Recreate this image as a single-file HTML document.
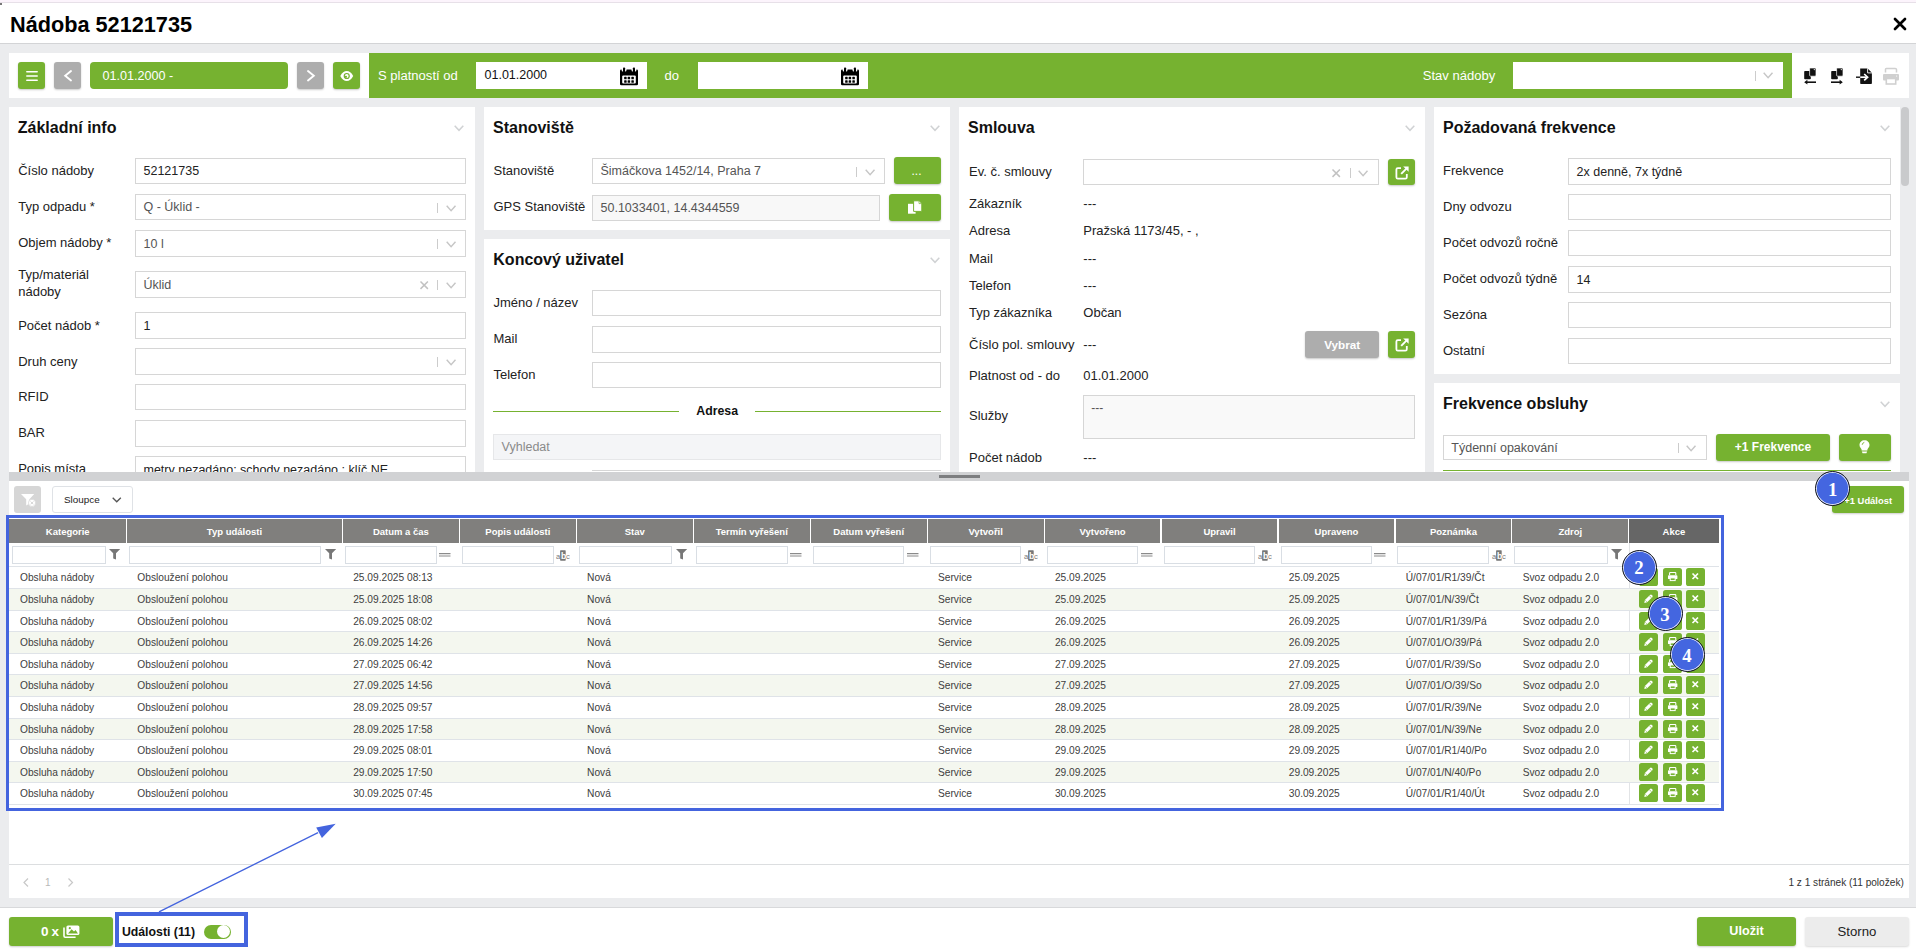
<!DOCTYPE html>
<html><head><meta charset="utf-8">
<style>
*{box-sizing:border-box}
html,body{margin:0;padding:0}
body{width:1916px;height:951px;overflow:hidden;position:relative;background:#ebecee;font-family:"Liberation Sans",sans-serif;color:#1a1a1a}
.a{position:absolute}
.t{position:absolute;white-space:nowrap;line-height:1}
</style></head><body>
<div class="a" style="left:0px;top:0px;width:1916px;height:2px;background:#fcf4fc"></div>
<div class="a" style="left:0px;top:2px;width:1916px;height:1px;background:#e7e0e8"></div>
<div class="a" style="left:0px;top:3px;width:1.5px;height:1.5px;background:#777"></div>
<div class="a" style="left:0px;top:3px;width:1916px;height:40px;background:#fff"></div>
<div class="a" style="left:0px;top:3px;width:1.5px;height:1.5px;background:#777"></div>
<div class="a" style="left:0px;top:43px;width:1916px;height:1px;background:#d3d4d6"></div>
<div class="t" style="left:10px;top:13.83px;font-size:21.7px;font-weight:bold;color:#000;">Nádoba 52121735</div>
<svg class="a" style="left:1894px;top:18px;overflow:visible" width="12" height="12" viewBox="0 0 12 12"><path d="M1 1L11 11M11 1L1 11" stroke="#000" stroke-width="2.7" stroke-linecap="round"/></svg>
<div class="a" style="left:9px;top:53px;width:1900px;height:45px;background:#fff"></div>
<div class="a" style="left:18px;top:62px;width:27px;height:27px;background:#76b230;border-radius:3px;box-shadow:0 1px 2px rgba(0,0,0,.22);"></div>
<svg class="a" style="left:25.5px;top:70.8px;overflow:visible" width="12.5" height="10" viewBox="0 0 12.5 10"><path d="M0.8 0.8H11.2M0.8 5H11.2M0.8 9.2H11.2" stroke="#fff" stroke-width="1.5" stroke-linecap="round"/></svg>
<div class="a" style="left:54px;top:62px;width:27px;height:27px;background:#adadad;border-radius:3px;box-shadow:0 1px 2px rgba(0,0,0,.2)"></div>
<svg class="a" style="left:64px;top:70px;overflow:visible" width="8" height="11.5" viewBox="0 0 8 11.5"><path d="M7 1L1.2 5.75L7 10.5" fill="none" stroke="#fff" stroke-width="1.9" stroke-linecap="round"/></svg>
<div class="a" style="left:90px;top:62px;width:198px;height:27px;background:#76b230;border-radius:4px"></div>
<div class="t" style="left:102.5px;top:70.13px;font-size:12.6px;font-weight:normal;color:#fff;">01.01.2000 -</div>
<div class="a" style="left:297px;top:62px;width:27px;height:27px;background:#adadad;border-radius:3px;box-shadow:0 1px 2px rgba(0,0,0,.2)"></div>
<svg class="a" style="left:306.5px;top:70px;overflow:visible" width="8" height="11.5" viewBox="0 0 8 11.5"><path d="M1 1L6.8 5.75L1 10.5" fill="none" stroke="#fff" stroke-width="1.9" stroke-linecap="round"/></svg>
<div class="a" style="left:333px;top:62px;width:27px;height:27px;background:#76b230;border-radius:3px;box-shadow:0 1px 2px rgba(0,0,0,.22);"></div>
<svg class="a" style="left:340px;top:70.5px;overflow:visible" width="13.5" height="10" viewBox="0 0 13.5 10"><path d="M0.3 5C2 1.6 4.3 0 6.75 0S11.5 1.6 13.2 5C11.5 8.4 9.2 10 6.75 10S2 8.4 0.3 5Z" fill="#fff"/><circle cx="6.75" cy="5" r="3.1" fill="#76b230"/><circle cx="6.75" cy="5" r="1.9" fill="#fff"/><circle cx="5.9" cy="5.8" r="1.1" fill="#76b230"/></svg>
<div class="a" style="left:369px;top:53px;width:1423px;height:45px;background:#76b230"></div>
<div class="t" style="left:378px;top:69.35px;font-size:13.05px;font-weight:normal;color:#fff;">S platností od</div>
<div class="a" style="left:476px;top:62px;width:171px;height:27px;background:#fff"></div>
<div class="t" style="left:484.5px;top:69.32px;font-size:12.5px;font-weight:normal;color:#111;">01.01.2000</div>
<svg class="a" style="left:620px;top:66.5px;overflow:visible" width="18" height="18.5" viewBox="0 0 18 18.5"><rect x="0" y="2.4" width="18" height="15.9" rx="1.3" fill="#000"/><rect x="1.7" y="1.2" width="4.7" height="3.4" rx="1" fill="#fff"/><rect x="11.6" y="1.2" width="4.7" height="3.4" rx="1" fill="#fff"/><rect x="1.7" y="0" width="4.7" height="2.4" fill="#fff"/><rect x="11.6" y="0" width="4.7" height="2.4" fill="#fff"/><rect x="3" y="0.4" width="2.1" height="4.9" rx="0.8" fill="#000"/><rect x="12.9" y="0.4" width="2.1" height="4.9" rx="0.8" fill="#000"/><rect x="2.2" y="8.5" width="13.6" height="8" rx="1" fill="#fff"/><rect x="4.15" y="9.85" width="2.5" height="2.5" rx="0.6" fill="#000"/><rect x="7.65" y="9.85" width="2.5" height="2.5" rx="0.6" fill="#000"/><rect x="11.35" y="9.85" width="2.5" height="2.5" rx="0.6" fill="#000"/><rect x="4.15" y="13.25" width="2.5" height="2.5" rx="0.6" fill="#000"/><rect x="7.65" y="13.25" width="2.5" height="2.5" rx="0.6" fill="#000"/><rect x="11.35" y="13.25" width="2.5" height="2.5" rx="0.6" fill="#000"/></svg>
<div class="t" style="left:664.5px;top:69.25px;font-size:13.05px;font-weight:normal;color:#fff;">do</div>
<div class="a" style="left:698px;top:62px;width:170px;height:27px;background:#fff"></div>
<svg class="a" style="left:841px;top:66.5px;overflow:visible" width="18" height="18.5" viewBox="0 0 18 18.5"><rect x="0" y="2.4" width="18" height="15.9" rx="1.3" fill="#000"/><rect x="1.7" y="1.2" width="4.7" height="3.4" rx="1" fill="#fff"/><rect x="11.6" y="1.2" width="4.7" height="3.4" rx="1" fill="#fff"/><rect x="1.7" y="0" width="4.7" height="2.4" fill="#fff"/><rect x="11.6" y="0" width="4.7" height="2.4" fill="#fff"/><rect x="3" y="0.4" width="2.1" height="4.9" rx="0.8" fill="#000"/><rect x="12.9" y="0.4" width="2.1" height="4.9" rx="0.8" fill="#000"/><rect x="2.2" y="8.5" width="13.6" height="8" rx="1" fill="#fff"/><rect x="4.15" y="9.85" width="2.5" height="2.5" rx="0.6" fill="#000"/><rect x="7.65" y="9.85" width="2.5" height="2.5" rx="0.6" fill="#000"/><rect x="11.35" y="9.85" width="2.5" height="2.5" rx="0.6" fill="#000"/><rect x="4.15" y="13.25" width="2.5" height="2.5" rx="0.6" fill="#000"/><rect x="7.65" y="13.25" width="2.5" height="2.5" rx="0.6" fill="#000"/><rect x="11.35" y="13.25" width="2.5" height="2.5" rx="0.6" fill="#000"/></svg>
<div class="t" style="left:1422.7px;top:69.35px;font-size:13.05px;font-weight:normal;color:#fff;">Stav nádoby</div>
<div class="a" style="left:1513px;top:62px;width:270px;height:27px;background:#fff"></div>
<div class="a" style="left:1754.5px;top:70.5px;width:1px;height:10px;background:#cccccc"></div>
<svg class="a" style="left:1763px;top:72.3px;overflow:visible" width="10.2" height="6.5" viewBox="0 0 10.2 6.5"><path d="M0.7 0.7L5.1 5.8L9.5 0.7" fill="none" stroke="#c6c6c6" stroke-width="1.4"/></svg>
<svg class="a" style="left:1804.2px;top:68px;overflow:visible" width="12" height="16" viewBox="0 0 12 16"><rect x="0.2" y="3" width="6.6" height="8.2" rx="0.8" fill="#111"/><path d="M5.6 0H11Q12 0 12 1V7.2Q12 8.2 11 8.2H6.6Q5.6 8.2 5.6 7.2Z" fill="#111" stroke="#fff" stroke-width="0.7"/><circle cx="10.3" cy="1.6" r="0.6" fill="#fff"/><path d="M1.6 14.2H12" stroke="#111" stroke-width="1.6"/><path d="M0.2 14.2L3.4 11.8V16.6Z" fill="#111"/></svg>
<svg class="a" style="left:1831.2px;top:68px;overflow:visible" width="12" height="16" viewBox="0 0 12 16"><rect x="0.2" y="3" width="6.6" height="8.2" rx="0.8" fill="#111"/><path d="M5.6 0H11Q12 0 12 1V7.2Q12 8.2 11 8.2H6.6Q5.6 8.2 5.6 7.2Z" fill="#111" stroke="#fff" stroke-width="0.7"/><circle cx="10.3" cy="1.6" r="0.6" fill="#fff"/><path d="M0 14.2H10.4" stroke="#111" stroke-width="1.6"/><path d="M11.8 14.2L8.6 11.8V16.6Z" fill="#111"/></svg>
<svg class="a" style="left:1856px;top:68px;overflow:visible" width="16" height="16" viewBox="0 0 16 16"><path d="M4.2 0.4H11.6L15.9 4.8V15.2Q15.9 16 15.1 16H5Q4.2 16 4.2 15.2Z" fill="#111"/><path d="M11.6 0.3V4.9H16" fill="none" stroke="#fff" stroke-width="0.9"/><path d="M0 9.2H10" stroke="#111" stroke-width="1.4"/><path d="M4.2 9.2H10.6" stroke="#fff" stroke-width="1.7"/><path d="M8.2 6L11.6 9.2L8.2 12.4" fill="none" stroke="#fff" stroke-width="1.7"/></svg>
<svg class="a" style="left:1883px;top:68px;overflow:visible" width="16" height="16" viewBox="0 0 16 16"><path d="M2.5 4.5V1.2Q2.5 0.4 3.3 0.4H12.2Q13.5 0.4 13.5 1.6V4.5" fill="none" stroke="#d0d0d0" stroke-width="1.5"/><rect x="0" y="6" width="16" height="6.5" rx="1" fill="#d0d0d0"/><rect x="3.3" y="10.5" width="9.4" height="5.5" fill="#fff" stroke="#d0d0d0" stroke-width="1.6"/><circle cx="13.6" cy="8" r="0.6" fill="#fff"/></svg>
<div class="a" style="left:9px;top:107px;width:466px;height:365px;background:#fff"></div>
<div class="a" style="left:484px;top:107px;width:466px;height:123px;background:#fff"></div>
<div class="a" style="left:484px;top:239px;width:466px;height:233px;background:#fff"></div>
<div class="a" style="left:959px;top:107px;width:466px;height:365px;background:#fff"></div>
<div class="a" style="left:1434px;top:107px;width:466px;height:267px;background:#fff"></div>
<div class="a" style="left:1434px;top:383px;width:466px;height:89px;background:#fff"></div>
<div class="a" style="left:1900.5px;top:107px;width:8.5px;height:79px;background:#c9cacc;border-radius:5px"></div>
<div class="t" style="left:17.8px;top:119.66px;font-size:16px;font-weight:bold;color:#111;">Základní info</div>
<svg class="a" style="left:454px;top:125.2px;overflow:visible" width="10" height="6" viewBox="0 0 10 6"><path d="M0.7 0.7L5.0 5.3L9.3 0.7" fill="none" stroke="#d0d2d4" stroke-width="1.5"/></svg>
<div class="a" style="left:135.2px;top:158.1px;width:330.8px;height:26.4px;background:#fff;border:1px solid #d6d6d6"></div>
<div class="t" style="left:143.5px;top:165.32px;font-size:12.5px;font-weight:normal;color:#222;">52121735</div>
<div class="t" style="left:18.2px;top:164.20px;font-size:13px;font-weight:normal;color:#222;">Číslo nádoby</div>
<div class="a" style="left:135.2px;top:194.1px;width:330.8px;height:26.4px;background:#fff;border:1px solid #d6d6d6"></div>
<div class="a" style="left:437.4px;top:202.7px;width:1px;height:10px;background:#cccccc"></div>
<svg class="a" style="left:445.7px;top:205.1px;overflow:visible" width="10.2" height="6.5" viewBox="0 0 10.2 6.5"><path d="M0.7 0.7L5.1 5.8L9.5 0.7" fill="none" stroke="#c6c6c6" stroke-width="1.4"/></svg>
<div class="t" style="left:143.5px;top:201.32px;font-size:12.5px;font-weight:normal;color:#555;">Q - Úklid -</div>
<div class="t" style="left:18.2px;top:200.20px;font-size:13px;font-weight:normal;color:#222;">Typ odpadu *</div>
<div class="a" style="left:135.2px;top:230.3px;width:330.8px;height:26.4px;background:#fff;border:1px solid #d6d6d6"></div>
<div class="a" style="left:437.4px;top:238.9px;width:1px;height:10px;background:#cccccc"></div>
<svg class="a" style="left:445.7px;top:241.3px;overflow:visible" width="10.2" height="6.5" viewBox="0 0 10.2 6.5"><path d="M0.7 0.7L5.1 5.8L9.5 0.7" fill="none" stroke="#c6c6c6" stroke-width="1.4"/></svg>
<div class="t" style="left:143.5px;top:237.52px;font-size:12.5px;font-weight:normal;color:#555;">10 l</div>
<div class="t" style="left:18.2px;top:236.40px;font-size:13px;font-weight:normal;color:#222;">Objem nádoby *</div>
<div class="a" style="left:135.2px;top:271.4px;width:330.8px;height:26.4px;background:#fff;border:1px solid #d6d6d6"></div>
<div class="a" style="left:437.4px;top:279.99999999999994px;width:1px;height:10px;background:#cccccc"></div>
<svg class="a" style="left:445.7px;top:282.4px;overflow:visible" width="10.2" height="6.5" viewBox="0 0 10.2 6.5"><path d="M0.7 0.7L5.1 5.8L9.5 0.7" fill="none" stroke="#c6c6c6" stroke-width="1.4"/></svg>
<svg class="a" style="left:419.7px;top:280.99999999999994px;overflow:visible" width="8.4" height="8.4" viewBox="0 0 8.4 8.4"><path d="M0.5 0.5L7.9 7.9M7.9 0.5L0.5 7.9" stroke="#c2c2c2" stroke-width="1.5"/></svg>
<div class="t" style="left:143.5px;top:278.62px;font-size:12.5px;font-weight:normal;color:#555;">Úklid</div>
<div class="t" style="left:18.2px;top:267.70px;font-size:13px;font-weight:normal;color:#222;">Typ/materiál</div>
<div class="t" style="left:18.2px;top:285.30px;font-size:13px;font-weight:normal;color:#222;">nádoby</div>
<div class="a" style="left:135.2px;top:312.4px;width:330.8px;height:26.4px;background:#fff;border:1px solid #d6d6d6"></div>
<div class="t" style="left:143.5px;top:319.62px;font-size:12.5px;font-weight:normal;color:#222;">1</div>
<div class="t" style="left:18.2px;top:318.50px;font-size:13px;font-weight:normal;color:#222;">Počet nádob *</div>
<div class="a" style="left:135.2px;top:348.4px;width:330.8px;height:26.4px;background:#fff;border:1px solid #d6d6d6"></div>
<div class="a" style="left:437.4px;top:356.99999999999994px;width:1px;height:10px;background:#cccccc"></div>
<svg class="a" style="left:445.7px;top:359.4px;overflow:visible" width="10.2" height="6.5" viewBox="0 0 10.2 6.5"><path d="M0.7 0.7L5.1 5.8L9.5 0.7" fill="none" stroke="#c6c6c6" stroke-width="1.4"/></svg>
<div class="t" style="left:18.2px;top:354.50px;font-size:13px;font-weight:normal;color:#222;">Druh ceny</div>
<div class="a" style="left:135.2px;top:384.1px;width:330.8px;height:26.4px;background:#fff;border:1px solid #d6d6d6"></div>
<div class="t" style="left:18.2px;top:390.20px;font-size:13px;font-weight:normal;color:#222;">RFID</div>
<div class="a" style="left:135.2px;top:420.2px;width:330.8px;height:26.4px;background:#fff;border:1px solid #d6d6d6"></div>
<div class="t" style="left:18.2px;top:426.30px;font-size:13px;font-weight:normal;color:#222;">BAR</div>
<div class="a" style="left:135.2px;top:456.3px;width:330.8px;height:26.4px;background:#fff;border:1px solid #d6d6d6"></div>
<div class="t" style="left:143.5px;top:463.52px;font-size:12.5px;font-weight:normal;color:#222;">metry nezadáno; schody nezadáno ; klíč NE</div>
<div class="t" style="left:18.2px;top:462.40px;font-size:13px;font-weight:normal;color:#222;">Popis místa</div>
<div class="t" style="left:493px;top:119.66px;font-size:16px;font-weight:bold;color:#111;">Stanoviště</div>
<svg class="a" style="left:929.5px;top:125.2px;overflow:visible" width="10" height="6" viewBox="0 0 10 6"><path d="M0.7 0.7L5.0 5.3L9.3 0.7" fill="none" stroke="#d0d2d4" stroke-width="1.5"/></svg>
<div class="t" style="left:493.5px;top:164.20px;font-size:13px;font-weight:normal;color:#222;">Stanoviště</div>
<div class="a" style="left:592.2px;top:158.3px;width:292.6px;height:26.2px;background:#fff;border:1px solid #d6d6d6"></div>
<div class="a" style="left:856.2px;top:166.8px;width:1px;height:10px;background:#cccccc"></div>
<svg class="a" style="left:864.5000000000001px;top:169.20000000000002px;overflow:visible" width="10.2" height="6.5" viewBox="0 0 10.2 6.5"><path d="M0.7 0.7L5.1 5.8L9.5 0.7" fill="none" stroke="#c6c6c6" stroke-width="1.4"/></svg>
<div class="t" style="left:600.5px;top:165.42px;font-size:12.5px;font-weight:normal;color:#555;">Šimáčkova 1452/14, Praha 7</div>
<div class="a" style="left:894px;top:157.2px;width:47px;height:26.6px;background:#76b230;border-radius:3px;box-shadow:0 1px 2px rgba(0,0,0,.22);"></div>
<div class="t" style="left:911.5px;top:165.24px;font-size:12px;font-weight:normal;color:#fff;">...</div>
<div class="t" style="left:493.5px;top:200.40px;font-size:13px;font-weight:normal;color:#222;">GPS Stanoviště</div>
<div class="a" style="left:592.2px;top:194.5px;width:287.5px;height:26px;background:#f8f8f8;border:1px solid #d6d6d6"></div>
<div class="t" style="left:600.5px;top:201.52px;font-size:12.5px;font-weight:normal;color:#555;">50.1033401, 14.4344559</div>
<div class="a" style="left:889.2px;top:194.2px;width:51.8px;height:26.5px;background:#76b230;border-radius:3px;box-shadow:0 1px 2px rgba(0,0,0,.22);"></div>
<svg class="a" style="left:908px;top:201px;overflow:visible" width="14" height="13" viewBox="0 0 14 13"><path d="M0 2.8H7.6V12.7H0Z" fill="#fff"/><path d="M5.6 -0.2H11.2L13.8 2.4V10.4H5.6Z" fill="#fff" stroke="#76b230" stroke-width="1"/><path d="M11 0.2V2.6H13.4" fill="none" stroke="#76b230" stroke-width="0.7"/></svg>
<div class="t" style="left:493.3px;top:251.86px;font-size:16px;font-weight:bold;color:#111;">Koncový uživatel</div>
<svg class="a" style="left:929.5px;top:257.2px;overflow:visible" width="10" height="6" viewBox="0 0 10 6"><path d="M0.7 0.7L5.0 5.3L9.3 0.7" fill="none" stroke="#d0d2d4" stroke-width="1.5"/></svg>
<div class="a" style="left:592.1px;top:290.1px;width:348.7px;height:26.4px;background:#fff;border:1px solid #d6d6d6"></div>
<div class="t" style="left:493.5px;top:296.20px;font-size:13px;font-weight:normal;color:#222;">Jméno / název</div>
<div class="a" style="left:592.1px;top:326.2px;width:348.7px;height:26.4px;background:#fff;border:1px solid #d6d6d6"></div>
<div class="t" style="left:493.5px;top:332.30px;font-size:13px;font-weight:normal;color:#222;">Mail</div>
<div class="a" style="left:592.1px;top:362px;width:348.7px;height:26.4px;background:#fff;border:1px solid #d6d6d6"></div>
<div class="t" style="left:493.5px;top:368.10px;font-size:13px;font-weight:normal;color:#222;">Telefon</div>
<div class="a" style="left:493.3px;top:410.6px;width:185.4px;height:1.2px;background:#76b230"></div>
<div class="a" style="left:755.3px;top:410.6px;width:185.5px;height:1.2px;background:#76b230"></div>
<div class="t" style="left:696.3px;top:404.89px;font-size:12.3px;font-weight:bold;color:#111;">Adresa</div>
<div class="a" style="left:493.3px;top:434.4px;width:447.5px;height:26.1px;background:#f4f5f7;border:1px solid #e6e7e9"></div>
<div class="t" style="left:501.6px;top:441.47px;font-size:12.5px;font-weight:normal;color:#8a8a8a;">Vyhledat</div>
<div class="a" style="left:592.1px;top:470px;width:348.7px;height:2px;background:#fff;border-top:1px solid #d6d6d6"></div>
<div class="t" style="left:968px;top:119.96px;font-size:16px;font-weight:bold;color:#111;">Smlouva</div>
<svg class="a" style="left:1404.5px;top:125.2px;overflow:visible" width="10" height="6" viewBox="0 0 10 6"><path d="M0.7 0.7L5.0 5.3L9.3 0.7" fill="none" stroke="#d0d2d4" stroke-width="1.5"/></svg>
<div class="t" style="left:969px;top:165.00px;font-size:13px;font-weight:normal;color:#222;">Ev. č. smlouvy</div>
<div class="a" style="left:1082.9px;top:159.1px;width:295.8px;height:26.1px;background:#fff;border:1px solid #d6d6d6"></div>
<div class="a" style="left:1350.1000000000001px;top:167.55px;width:1px;height:10px;background:#cccccc"></div>
<svg class="a" style="left:1358.4px;top:169.95000000000002px;overflow:visible" width="10.2" height="6.5" viewBox="0 0 10.2 6.5"><path d="M0.7 0.7L5.1 5.8L9.5 0.7" fill="none" stroke="#c6c6c6" stroke-width="1.4"/></svg>
<svg class="a" style="left:1332.4px;top:168.55px;overflow:visible" width="8.4" height="8.4" viewBox="0 0 8.4 8.4"><path d="M0.5 0.5L7.9 7.9M7.9 0.5L0.5 7.9" stroke="#c2c2c2" stroke-width="1.5"/></svg>
<div class="a" style="left:1388.1px;top:159.1px;width:26.7px;height:26.4px;background:#76b230;border-radius:3px;box-shadow:0 1px 2px rgba(0,0,0,.22);"></div>
<svg class="a" style="left:1394.6px;top:165.6px;overflow:visible" width="14" height="14" viewBox="0 0 14 14"><path d="M6 2.2H2.8Q1.4 2.2 1.4 3.6V11.2Q1.4 12.6 2.8 12.6H10.4Q11.8 12.6 11.8 11.2V8" fill="none" stroke="#fff" stroke-width="1.8"/><path d="M6.2 7.8L12.4 1.6" stroke="#fff" stroke-width="1.9"/><path d="M8.2 0.4H13.6V5.8Z" fill="#fff"/></svg>
<div class="t" style="left:969px;top:196.50px;font-size:13px;font-weight:normal;color:#222;">Zákazník</div>
<div class="t" style="left:1083.3px;top:196.50px;font-size:13px;font-weight:normal;color:#222;">---</div>
<div class="t" style="left:969px;top:224.20px;font-size:13px;font-weight:normal;color:#222;">Adresa</div>
<div class="t" style="left:1083.3px;top:224.20px;font-size:13px;font-weight:normal;color:#222;">Pražská 1173/45, - ,</div>
<div class="t" style="left:969px;top:252.10px;font-size:13px;font-weight:normal;color:#222;">Mail</div>
<div class="t" style="left:1083.3px;top:252.10px;font-size:13px;font-weight:normal;color:#222;">---</div>
<div class="t" style="left:969px;top:278.70px;font-size:13px;font-weight:normal;color:#222;">Telefon</div>
<div class="t" style="left:1083.3px;top:278.70px;font-size:13px;font-weight:normal;color:#222;">---</div>
<div class="t" style="left:969px;top:306.10px;font-size:13px;font-weight:normal;color:#222;">Typ zákazníka</div>
<div class="t" style="left:1083.3px;top:306.10px;font-size:13px;font-weight:normal;color:#222;">Občan</div>
<div class="t" style="left:969px;top:337.70px;font-size:13px;font-weight:normal;color:#222;">Číslo pol. smlouvy</div>
<div class="t" style="left:1083.3px;top:337.70px;font-size:13px;font-weight:normal;color:#222;">---</div>
<div class="t" style="left:969px;top:368.80px;font-size:13px;font-weight:normal;color:#222;">Platnost od - do</div>
<div class="t" style="left:1083.3px;top:368.80px;font-size:13px;font-weight:normal;color:#222;">01.01.2000</div>
<div class="a" style="left:1304.9px;top:331.4px;width:73.8px;height:26.4px;background:#adadad;border-radius:3px;box-shadow:0 1px 2px rgba(0,0,0,.22)"></div>
<div class="t" style="left:1042.2px;width:600px;text-align:center;top:339.10px;font-size:11.7px;font-weight:bold;color:#fff;">Vybrat</div>
<div class="a" style="left:1388.1px;top:331.4px;width:26.7px;height:26.4px;background:#76b230;border-radius:3px;box-shadow:0 1px 2px rgba(0,0,0,.22);"></div>
<svg class="a" style="left:1394.6px;top:337.9px;overflow:visible" width="14" height="14" viewBox="0 0 14 14"><path d="M6 2.2H2.8Q1.4 2.2 1.4 3.6V11.2Q1.4 12.6 2.8 12.6H10.4Q11.8 12.6 11.8 11.2V8" fill="none" stroke="#fff" stroke-width="1.8"/><path d="M6.2 7.8L12.4 1.6" stroke="#fff" stroke-width="1.9"/><path d="M8.2 0.4H13.6V5.8Z" fill="#fff"/></svg>
<div class="t" style="left:969px;top:409.40px;font-size:13px;font-weight:normal;color:#222;">Služby</div>
<div class="a" style="left:1083px;top:395.3px;width:332px;height:44.2px;background:#f9f9f9;border:1px solid #d6d6d6"></div>
<div class="t" style="left:1091.3px;top:401.84px;font-size:12px;font-weight:normal;color:#555;">---</div>
<div class="t" style="left:969px;top:451.10px;font-size:13px;font-weight:normal;color:#222;">Počet nádob</div>
<div class="t" style="left:1083.3px;top:451.10px;font-size:13px;font-weight:normal;color:#222;">---</div>
<div class="t" style="left:1443px;top:119.76px;font-size:16px;font-weight:bold;color:#111;">Požadovaná frekvence</div>
<svg class="a" style="left:1879.5px;top:125.2px;overflow:visible" width="10" height="6" viewBox="0 0 10 6"><path d="M0.7 0.7L5.0 5.3L9.3 0.7" fill="none" stroke="#d0d2d4" stroke-width="1.5"/></svg>
<div class="a" style="left:1568.3px;top:158.4px;width:322.5px;height:26.2px;background:#fff;border:1px solid #d6d6d6"></div>
<div class="t" style="left:1576.6px;top:165.52px;font-size:12.5px;font-weight:normal;color:#222;">2x denně, 7x týdně</div>
<div class="t" style="left:1443px;top:164.40px;font-size:13px;font-weight:normal;color:#222;">Frekvence</div>
<div class="a" style="left:1568.3px;top:193.9px;width:322.5px;height:26.2px;background:#fff;border:1px solid #d6d6d6"></div>
<div class="t" style="left:1443px;top:199.90px;font-size:13px;font-weight:normal;color:#222;">Dny odvozu</div>
<div class="a" style="left:1568.3px;top:230.1px;width:322.5px;height:26.2px;background:#fff;border:1px solid #d6d6d6"></div>
<div class="t" style="left:1443px;top:236.10px;font-size:13px;font-weight:normal;color:#222;">Počet odvozů ročně</div>
<div class="a" style="left:1568.3px;top:266.4px;width:322.5px;height:26.2px;background:#fff;border:1px solid #d6d6d6"></div>
<div class="t" style="left:1576.6px;top:273.52px;font-size:12.5px;font-weight:normal;color:#222;">14</div>
<div class="t" style="left:1443px;top:272.40px;font-size:13px;font-weight:normal;color:#222;">Počet odvozů týdně</div>
<div class="a" style="left:1568.3px;top:302px;width:322.5px;height:26.2px;background:#fff;border:1px solid #d6d6d6"></div>
<div class="t" style="left:1443px;top:308.00px;font-size:13px;font-weight:normal;color:#222;">Sezóna</div>
<div class="a" style="left:1568.3px;top:338.3px;width:322.5px;height:26.2px;background:#fff;border:1px solid #d6d6d6"></div>
<div class="t" style="left:1443px;top:344.30px;font-size:13px;font-weight:normal;color:#222;">Ostatní</div>
<div class="t" style="left:1443px;top:395.76px;font-size:16px;font-weight:bold;color:#111;">Frekvence obsluhy</div>
<svg class="a" style="left:1879.5px;top:401.2px;overflow:visible" width="10" height="6" viewBox="0 0 10 6"><path d="M0.7 0.7L5.0 5.3L9.3 0.7" fill="none" stroke="#d0d2d4" stroke-width="1.5"/></svg>
<div class="a" style="left:1443px;top:434.6px;width:263.5px;height:25.9px;background:#fff;border:1px solid #d6d6d6"></div>
<div class="a" style="left:1677.9px;top:442.95px;width:1px;height:10px;background:#cccccc"></div>
<svg class="a" style="left:1686.2px;top:445.35px;overflow:visible" width="10.2" height="6.5" viewBox="0 0 10.2 6.5"><path d="M0.7 0.7L5.1 5.8L9.5 0.7" fill="none" stroke="#c6c6c6" stroke-width="1.4"/></svg>
<div class="t" style="left:1451.3px;top:441.57px;font-size:12.5px;font-weight:normal;color:#555;">Týdenní opakování</div>
<div class="a" style="left:1716px;top:434.1px;width:113.6px;height:26.5px;background:#76b230;border-radius:3px;box-shadow:0 1px 2px rgba(0,0,0,.22);"></div>
<div class="t" style="left:1473px;width:600px;text-align:center;top:441.04px;font-size:12px;font-weight:bold;color:#fff;">+1 Frekvence</div>
<div class="a" style="left:1839px;top:434.1px;width:51.8px;height:26.5px;background:#76b230;border-radius:3px;box-shadow:0 1px 2px rgba(0,0,0,.22);"></div>
<svg class="a" style="left:1859.2px;top:439.6px;overflow:visible" width="11" height="14" viewBox="0 0 11 14"><path d="M5.5 0.3C2.6 0.3 0.5 2.4 0.5 5.1C0.5 7.2 2 8.2 2.6 9.6V10.6H8.4V9.6C9 8.2 10.5 7.2 10.5 5.1C10.5 2.4 8.4 0.3 5.5 0.3Z" fill="#fff"/><path d="M2.8 11.6H8.2L7.4 13.3H3.6Z" fill="#fff"/><path d="M3.2 4.8Q3.4 2.8 5.3 2.4" fill="none" stroke="#76b230" stroke-width="0.9"/></svg>
<div class="a" style="left:1443px;top:469.7px;width:447.8px;height:1.3px;background:#76b230"></div>
<div class="a" style="left:9px;top:472px;width:1900px;height:9px;background:#d1d2d4"></div>
<div class="a" style="left:939px;top:475px;width:41px;height:3px;background:#7d7e80"></div>
<div class="a" style="left:9px;top:481px;width:1900px;height:417px;background:#fff"></div>
<div class="a" style="left:14px;top:486px;width:27px;height:27px;background:#d6d6d6;border-radius:3px"></div>
<svg class="a" style="left:20.9px;top:494px;overflow:visible" width="15" height="13" viewBox="0 0 15 13"><path d="M0 0H13.2L8.4 5.2V9.4L5.2 11.6V5.2Z" fill="#fff"/><circle cx="11" cy="8.9" r="3.6" fill="#fff" stroke="#d6d6d6" stroke-width="0.7"/><path d="M9.6 7.5L12.4 10.3M12.4 7.5L9.6 10.3" stroke="#d0d0d0" stroke-width="0.9"/></svg>
<div class="a" style="left:52.2px;top:486px;width:80.5px;height:27px;background:#fff;border:1px solid #dfe2e6;border-radius:3px"></div>
<div class="t" style="left:64px;top:495.02px;font-size:9.9px;font-weight:normal;color:#222;">Sloupce</div>
<svg class="a" style="left:111.5px;top:497.3px;overflow:visible" width="9.5" height="5.5" viewBox="0 0 9.5 5.5"><path d="M0.7 0.7L4.75 4.8L8.8 0.7" fill="none" stroke="#555" stroke-width="1.3"/></svg>
<div class="a" style="left:1832px;top:486.2px;width:72px;height:26.6px;background:#76b230;border-radius:3px;box-shadow:0 1px 2px rgba(0,0,0,.2)"></div>
<div class="t" style="left:1292px;width:600px;text-align:right;top:495.64px;font-size:9.4px;font-weight:bold;color:#fff;">+1 Událost</div>
<div class="a" style="left:9px;top:519px;width:1710px;height:24px;background:#807f7d"></div>
<div class="a" style="left:1628.9px;top:519px;width:90.1px;height:24px;background:#666"></div>
<div class="t" style="left:-232.25px;width:600px;text-align:center;top:526.56px;font-size:9.5px;font-weight:bold;color:#fff;">Kategorie</div>
<div class="a" style="left:12px;top:546.3px;width:93.5px;height:17.4px;background:#fff;border:1px solid #d9dee4"></div>
<svg class="a" style="left:108.8px;top:548.9px;overflow:visible" width="11.2" height="10.6" viewBox="0 0 11.2 10.6"><path d="M0 0H11.2L7 4.2V10.6L4.2 9.4V4.2Z" fill="#777"/></svg>
<div class="a" style="left:125.9px;top:519px;width:1.2px;height:24px;background:#fff"></div>
<div class="t" style="left:-65.55000000000001px;width:600px;text-align:center;top:526.56px;font-size:9.5px;font-weight:bold;color:#fff;">Typ události</div>
<div class="a" style="left:129.0px;top:546.3px;width:192.39999999999998px;height:17.4px;background:#fff;border:1px solid #d9dee4"></div>
<svg class="a" style="left:324.7px;top:548.9px;overflow:visible" width="11.2" height="10.6" viewBox="0 0 11.2 10.6"><path d="M0 0H11.2L7 4.2V10.6L4.2 9.4V4.2Z" fill="#777"/></svg>
<div class="a" style="left:341.79999999999995px;top:519px;width:1.2px;height:24px;background:#fff"></div>
<div class="t" style="left:100.875px;width:600px;text-align:center;top:526.56px;font-size:9.5px;font-weight:bold;color:#fff;">Datum a čas</div>
<div class="a" style="left:344.9px;top:546.3px;width:91.75px;height:17.4px;background:#fff;border:1px solid #d9dee4"></div>
<svg class="a" style="left:438.84999999999997px;top:553.2px;overflow:visible" width="11.5" height="3.6" viewBox="0 0 11.5 3.6"><path d="M0 0.6H11.5M0 3H11.5" stroke="#8a8a8a" stroke-width="1.1"/></svg>
<div class="a" style="left:458.74999999999994px;top:519px;width:1.2px;height:24px;background:#fff"></div>
<div class="t" style="left:217.82499999999993px;width:600px;text-align:center;top:526.56px;font-size:9.5px;font-weight:bold;color:#fff;">Popis události</div>
<div class="a" style="left:461.84999999999997px;top:546.3px;width:91.74999999999994px;height:17.4px;background:#fff;border:1px solid #d9dee4"></div>
<svg class="a" style="left:550.0px;top:545px;overflow:visible" width="25" height="20" viewBox="0 0 25 20"><g font-family="Liberation Sans" fill="#777"><text x="5.9" y="13.8" font-size="7.6">a</text><rect x="10.1" y="5.3" width="5.6" height="10.4" rx="0.6"/><text x="16" y="13.8" font-size="7.6">c</text></g><text x="10.9" y="13.6" font-size="8.6" font-weight="bold" fill="#fff" font-family="Liberation Sans">b</text></svg>
<div class="a" style="left:575.6999999999999px;top:519px;width:1.2px;height:24px;background:#fff"></div>
<div class="t" style="left:334.775px;width:600px;text-align:center;top:526.56px;font-size:9.5px;font-weight:bold;color:#fff;">Stav</div>
<div class="a" style="left:578.8px;top:546.3px;width:93.45000000000005px;height:17.4px;background:#fff;border:1px solid #d9dee4"></div>
<svg class="a" style="left:675.55px;top:548.9px;overflow:visible" width="11.2" height="10.6" viewBox="0 0 11.2 10.6"><path d="M0 0H11.2L7 4.2V10.6L4.2 9.4V4.2Z" fill="#777"/></svg>
<div class="a" style="left:692.65px;top:519px;width:1.2px;height:24px;background:#fff"></div>
<div class="t" style="left:451.725px;width:600px;text-align:center;top:526.56px;font-size:9.5px;font-weight:bold;color:#fff;">Termín vyřešení</div>
<div class="a" style="left:695.75px;top:546.3px;width:91.75px;height:17.4px;background:#fff;border:1px solid #d9dee4"></div>
<svg class="a" style="left:789.7px;top:553.2px;overflow:visible" width="11.5" height="3.6" viewBox="0 0 11.5 3.6"><path d="M0 0.6H11.5M0 3H11.5" stroke="#8a8a8a" stroke-width="1.1"/></svg>
<div class="a" style="left:809.6px;top:519px;width:1.2px;height:24px;background:#fff"></div>
<div class="t" style="left:568.675px;width:600px;text-align:center;top:526.56px;font-size:9.5px;font-weight:bold;color:#fff;">Datum vyřešení</div>
<div class="a" style="left:812.7px;top:546.3px;width:91.74999999999989px;height:17.4px;background:#fff;border:1px solid #d9dee4"></div>
<svg class="a" style="left:906.65px;top:553.2px;overflow:visible" width="11.5" height="3.6" viewBox="0 0 11.5 3.6"><path d="M0 0.6H11.5M0 3H11.5" stroke="#8a8a8a" stroke-width="1.1"/></svg>
<div class="a" style="left:926.55px;top:519px;width:1.2px;height:24px;background:#fff"></div>
<div class="t" style="left:685.625px;width:600px;text-align:center;top:526.56px;font-size:9.5px;font-weight:bold;color:#fff;">Vytvořil</div>
<div class="a" style="left:929.65px;top:546.3px;width:91.74999999999989px;height:17.4px;background:#fff;border:1px solid #d9dee4"></div>
<svg class="a" style="left:1017.8px;top:545px;overflow:visible" width="25" height="20" viewBox="0 0 25 20"><g font-family="Liberation Sans" fill="#777"><text x="5.9" y="13.8" font-size="7.6">a</text><rect x="10.1" y="5.3" width="5.6" height="10.4" rx="0.6"/><text x="16" y="13.8" font-size="7.6">c</text></g><text x="10.9" y="13.6" font-size="8.6" font-weight="bold" fill="#fff" font-family="Liberation Sans">b</text></svg>
<div class="a" style="left:1043.5px;top:519px;width:1.2px;height:24px;background:#fff"></div>
<div class="t" style="left:802.5749999999998px;width:600px;text-align:center;top:526.56px;font-size:9.5px;font-weight:bold;color:#fff;">Vytvořeno</div>
<div class="a" style="left:1046.6px;top:546.3px;width:91.75px;height:17.4px;background:#fff;border:1px solid #d9dee4"></div>
<svg class="a" style="left:1140.55px;top:553.2px;overflow:visible" width="11.5" height="3.6" viewBox="0 0 11.5 3.6"><path d="M0 0.6H11.5M0 3H11.5" stroke="#8a8a8a" stroke-width="1.1"/></svg>
<div class="a" style="left:1160.45px;top:519px;width:1.2px;height:24px;background:#fff"></div>
<div class="t" style="left:919.5250000000001px;width:600px;text-align:center;top:526.56px;font-size:9.5px;font-weight:bold;color:#fff;">Upravil</div>
<div class="a" style="left:1163.55px;top:546.3px;width:91.75px;height:17.4px;background:#fff;border:1px solid #d9dee4"></div>
<svg class="a" style="left:1251.7px;top:545px;overflow:visible" width="25" height="20" viewBox="0 0 25 20"><g font-family="Liberation Sans" fill="#777"><text x="5.9" y="13.8" font-size="7.6">a</text><rect x="10.1" y="5.3" width="5.6" height="10.4" rx="0.6"/><text x="16" y="13.8" font-size="7.6">c</text></g><text x="10.9" y="13.6" font-size="8.6" font-weight="bold" fill="#fff" font-family="Liberation Sans">b</text></svg>
<div class="a" style="left:1277.4px;top:519px;width:1.2px;height:24px;background:#fff"></div>
<div class="t" style="left:1036.475px;width:600px;text-align:center;top:526.56px;font-size:9.5px;font-weight:bold;color:#fff;">Upraveno</div>
<div class="a" style="left:1280.5px;top:546.3px;width:91.74999999999977px;height:17.4px;background:#fff;border:1px solid #d9dee4"></div>
<svg class="a" style="left:1374.4499999999998px;top:553.2px;overflow:visible" width="11.5" height="3.6" viewBox="0 0 11.5 3.6"><path d="M0 0.6H11.5M0 3H11.5" stroke="#8a8a8a" stroke-width="1.1"/></svg>
<div class="a" style="left:1394.35px;top:519px;width:1.2px;height:24px;background:#fff"></div>
<div class="t" style="left:1153.425px;width:600px;text-align:center;top:526.56px;font-size:9.5px;font-weight:bold;color:#fff;">Poznámka</div>
<div class="a" style="left:1397.4499999999998px;top:546.3px;width:91.75000000000023px;height:17.4px;background:#fff;border:1px solid #d9dee4"></div>
<svg class="a" style="left:1485.6000000000001px;top:545px;overflow:visible" width="25" height="20" viewBox="0 0 25 20"><g font-family="Liberation Sans" fill="#777"><text x="5.9" y="13.8" font-size="7.6">a</text><rect x="10.1" y="5.3" width="5.6" height="10.4" rx="0.6"/><text x="16" y="13.8" font-size="7.6">c</text></g><text x="10.9" y="13.6" font-size="8.6" font-weight="bold" fill="#fff" font-family="Liberation Sans">b</text></svg>
<div class="a" style="left:1511.3000000000002px;top:519px;width:1.2px;height:24px;background:#fff"></div>
<div class="t" style="left:1270.375px;width:600px;text-align:center;top:526.56px;font-size:9.5px;font-weight:bold;color:#fff;">Zdroj</div>
<div class="a" style="left:1514.4px;top:546.3px;width:93.44999999999982px;height:17.4px;background:#fff;border:1px solid #d9dee4"></div>
<svg class="a" style="left:1611.1499999999999px;top:548.9px;overflow:visible" width="11.2" height="10.6" viewBox="0 0 11.2 10.6"><path d="M0 0H11.2L7 4.2V10.6L4.2 9.4V4.2Z" fill="#777"/></svg>
<div class="a" style="left:1628.25px;top:519px;width:1.2px;height:24px;background:#fff"></div>
<div class="t" style="left:1373.925px;width:600px;text-align:center;top:526.56px;font-size:9.5px;font-weight:bold;color:#fff;">Akce</div>
<div class="a" style="left:9px;top:566px;width:1710px;height:1px;background:#dfe3e8"></div>
<div class="a" style="left:1628.5px;top:543px;width:0.9px;height:262px;background:#e2e4e6"></div>
<div class="a" style="left:9px;top:588px;width:1710px;height:1px;background:#dfe3e8"></div>
<div class="t" style="left:20px;top:573.37px;font-size:10.2px;font-weight:normal;color:#404040;">Obsluha nádoby</div>
<div class="t" style="left:137.3px;top:573.37px;font-size:10.2px;font-weight:normal;color:#404040;">Obsloužení polohou</div>
<div class="t" style="left:353.2px;top:573.37px;font-size:10.2px;font-weight:normal;color:#404040;">25.09.2025 08:13</div>
<div class="t" style="left:587.0999999999999px;top:573.37px;font-size:10.2px;font-weight:normal;color:#404040;">Nová</div>
<div class="t" style="left:937.9499999999999px;top:573.37px;font-size:10.2px;font-weight:normal;color:#404040;">Service</div>
<div class="t" style="left:1054.8999999999999px;top:573.37px;font-size:10.2px;font-weight:normal;color:#404040;">25.09.2025</div>
<div class="t" style="left:1288.8px;top:573.37px;font-size:10.2px;font-weight:normal;color:#404040;">25.09.2025</div>
<div class="t" style="left:1405.7499999999998px;top:573.37px;font-size:10.2px;font-weight:normal;color:#404040;">Ú/07/01/R1/39/Čt</div>
<div class="t" style="left:1522.7px;top:573.37px;font-size:10.2px;font-weight:normal;color:#404040;">Svoz odpadu 2.0</div>
<div class="a" style="left:1639px;top:568px;width:18.9px;height:18px;background:#76b230;border-radius:2.6px"></div>
<svg class="a" style="left:1643.9px;top:572.1px;overflow:visible" width="9.2" height="9.2" viewBox="0 0 9.2 9.2"><path d="M0.3 8.9L0.87 6.07L6.0 0.94Q6.9 0.1 7.9 0.9L8.3 1.3Q9.1 2.3 8.26 3.2L3.13 8.33Z" fill="#fff"/><path d="M5.3 1.6L7.6 3.9" stroke="#76b230" stroke-width="0.7"/><path d="M1.2 6.2L3.0 8.0" stroke="#76b230" stroke-width="0.5"/></svg>
<div class="a" style="left:1663.1px;top:568px;width:18.9px;height:18px;background:#76b230;border-radius:2.6px"></div>
<svg class="a" style="left:1667.8999999999999px;top:572.3px;overflow:visible" width="9.4" height="9" viewBox="0 0 9.4 9"><path d="M1.6 3V1.2Q1.6 0.5 2.3 0.5H7.1Q7.8 0.5 7.8 1.2V3" fill="none" stroke="#fff" stroke-width="1.1"/><rect x="0" y="3.3" width="9.4" height="3.8" rx="0.7" fill="#fff"/><rect x="2.2" y="5.9" width="5" height="2.7" fill="#76b230" stroke="#fff" stroke-width="1"/></svg>
<div class="a" style="left:1686.1px;top:568px;width:18.9px;height:18px;background:#76b230;border-radius:2.6px"></div>
<svg class="a" style="left:1692.3999999999999px;top:573.4px;overflow:visible" width="6.5" height="6.5" viewBox="0 0 6.5 6.5"><path d="M0.5 0.5L6.0 6.0M6.0 0.5L0.5 6.0" stroke="#fff" stroke-width="1.7"/></svg>
<div class="a" style="left:9px;top:589px;width:1710px;height:21px;background:#f4f7ef"></div>
<div class="a" style="left:9px;top:610px;width:1710px;height:1px;background:#dfe3e8"></div>
<div class="t" style="left:20px;top:595.37px;font-size:10.2px;font-weight:normal;color:#404040;">Obsluha nádoby</div>
<div class="t" style="left:137.3px;top:595.37px;font-size:10.2px;font-weight:normal;color:#404040;">Obsloužení polohou</div>
<div class="t" style="left:353.2px;top:595.37px;font-size:10.2px;font-weight:normal;color:#404040;">25.09.2025 18:08</div>
<div class="t" style="left:587.0999999999999px;top:595.37px;font-size:10.2px;font-weight:normal;color:#404040;">Nová</div>
<div class="t" style="left:937.9499999999999px;top:595.37px;font-size:10.2px;font-weight:normal;color:#404040;">Service</div>
<div class="t" style="left:1054.8999999999999px;top:595.37px;font-size:10.2px;font-weight:normal;color:#404040;">25.09.2025</div>
<div class="t" style="left:1288.8px;top:595.37px;font-size:10.2px;font-weight:normal;color:#404040;">25.09.2025</div>
<div class="t" style="left:1405.7499999999998px;top:595.37px;font-size:10.2px;font-weight:normal;color:#404040;">Ú/07/01/N/39/Čt</div>
<div class="t" style="left:1522.7px;top:595.37px;font-size:10.2px;font-weight:normal;color:#404040;">Svoz odpadu 2.0</div>
<div class="a" style="left:1639px;top:590px;width:18.9px;height:18px;background:#76b230;border-radius:2.6px"></div>
<svg class="a" style="left:1643.9px;top:594.1px;overflow:visible" width="9.2" height="9.2" viewBox="0 0 9.2 9.2"><path d="M0.3 8.9L0.87 6.07L6.0 0.94Q6.9 0.1 7.9 0.9L8.3 1.3Q9.1 2.3 8.26 3.2L3.13 8.33Z" fill="#fff"/><path d="M5.3 1.6L7.6 3.9" stroke="#76b230" stroke-width="0.7"/><path d="M1.2 6.2L3.0 8.0" stroke="#76b230" stroke-width="0.5"/></svg>
<div class="a" style="left:1663.1px;top:590px;width:18.9px;height:18px;background:#76b230;border-radius:2.6px"></div>
<svg class="a" style="left:1667.8999999999999px;top:594.3px;overflow:visible" width="9.4" height="9" viewBox="0 0 9.4 9"><path d="M1.6 3V1.2Q1.6 0.5 2.3 0.5H7.1Q7.8 0.5 7.8 1.2V3" fill="none" stroke="#fff" stroke-width="1.1"/><rect x="0" y="3.3" width="9.4" height="3.8" rx="0.7" fill="#fff"/><rect x="2.2" y="5.9" width="5" height="2.7" fill="#76b230" stroke="#fff" stroke-width="1"/></svg>
<div class="a" style="left:1686.1px;top:590px;width:18.9px;height:18px;background:#76b230;border-radius:2.6px"></div>
<svg class="a" style="left:1692.3999999999999px;top:595.4px;overflow:visible" width="6.5" height="6.5" viewBox="0 0 6.5 6.5"><path d="M0.5 0.5L6.0 6.0M6.0 0.5L0.5 6.0" stroke="#fff" stroke-width="1.7"/></svg>
<div class="a" style="left:9px;top:631px;width:1710px;height:1px;background:#dfe3e8"></div>
<div class="t" style="left:20px;top:617.37px;font-size:10.2px;font-weight:normal;color:#404040;">Obsluha nádoby</div>
<div class="t" style="left:137.3px;top:617.37px;font-size:10.2px;font-weight:normal;color:#404040;">Obsloužení polohou</div>
<div class="t" style="left:353.2px;top:617.37px;font-size:10.2px;font-weight:normal;color:#404040;">26.09.2025 08:02</div>
<div class="t" style="left:587.0999999999999px;top:617.37px;font-size:10.2px;font-weight:normal;color:#404040;">Nová</div>
<div class="t" style="left:937.9499999999999px;top:617.37px;font-size:10.2px;font-weight:normal;color:#404040;">Service</div>
<div class="t" style="left:1054.8999999999999px;top:617.37px;font-size:10.2px;font-weight:normal;color:#404040;">26.09.2025</div>
<div class="t" style="left:1288.8px;top:617.37px;font-size:10.2px;font-weight:normal;color:#404040;">26.09.2025</div>
<div class="t" style="left:1405.7499999999998px;top:617.37px;font-size:10.2px;font-weight:normal;color:#404040;">Ú/07/01/R1/39/Pá</div>
<div class="t" style="left:1522.7px;top:617.37px;font-size:10.2px;font-weight:normal;color:#404040;">Svoz odpadu 2.0</div>
<div class="a" style="left:1639px;top:612px;width:18.9px;height:18px;background:#76b230;border-radius:2.6px"></div>
<svg class="a" style="left:1643.9px;top:616.1px;overflow:visible" width="9.2" height="9.2" viewBox="0 0 9.2 9.2"><path d="M0.3 8.9L0.87 6.07L6.0 0.94Q6.9 0.1 7.9 0.9L8.3 1.3Q9.1 2.3 8.26 3.2L3.13 8.33Z" fill="#fff"/><path d="M5.3 1.6L7.6 3.9" stroke="#76b230" stroke-width="0.7"/><path d="M1.2 6.2L3.0 8.0" stroke="#76b230" stroke-width="0.5"/></svg>
<div class="a" style="left:1663.1px;top:612px;width:18.9px;height:18px;background:#76b230;border-radius:2.6px"></div>
<svg class="a" style="left:1667.8999999999999px;top:616.3px;overflow:visible" width="9.4" height="9" viewBox="0 0 9.4 9"><path d="M1.6 3V1.2Q1.6 0.5 2.3 0.5H7.1Q7.8 0.5 7.8 1.2V3" fill="none" stroke="#fff" stroke-width="1.1"/><rect x="0" y="3.3" width="9.4" height="3.8" rx="0.7" fill="#fff"/><rect x="2.2" y="5.9" width="5" height="2.7" fill="#76b230" stroke="#fff" stroke-width="1"/></svg>
<div class="a" style="left:1686.1px;top:612px;width:18.9px;height:18px;background:#76b230;border-radius:2.6px"></div>
<svg class="a" style="left:1692.3999999999999px;top:617.4px;overflow:visible" width="6.5" height="6.5" viewBox="0 0 6.5 6.5"><path d="M0.5 0.5L6.0 6.0M6.0 0.5L0.5 6.0" stroke="#fff" stroke-width="1.7"/></svg>
<div class="a" style="left:9px;top:632px;width:1710px;height:21px;background:#f4f7ef"></div>
<div class="a" style="left:9px;top:653px;width:1710px;height:1px;background:#dfe3e8"></div>
<div class="t" style="left:20px;top:638.37px;font-size:10.2px;font-weight:normal;color:#404040;">Obsluha nádoby</div>
<div class="t" style="left:137.3px;top:638.37px;font-size:10.2px;font-weight:normal;color:#404040;">Obsloužení polohou</div>
<div class="t" style="left:353.2px;top:638.37px;font-size:10.2px;font-weight:normal;color:#404040;">26.09.2025 14:26</div>
<div class="t" style="left:587.0999999999999px;top:638.37px;font-size:10.2px;font-weight:normal;color:#404040;">Nová</div>
<div class="t" style="left:937.9499999999999px;top:638.37px;font-size:10.2px;font-weight:normal;color:#404040;">Service</div>
<div class="t" style="left:1054.8999999999999px;top:638.37px;font-size:10.2px;font-weight:normal;color:#404040;">26.09.2025</div>
<div class="t" style="left:1288.8px;top:638.37px;font-size:10.2px;font-weight:normal;color:#404040;">26.09.2025</div>
<div class="t" style="left:1405.7499999999998px;top:638.37px;font-size:10.2px;font-weight:normal;color:#404040;">Ú/07/01/O/39/Pá</div>
<div class="t" style="left:1522.7px;top:638.37px;font-size:10.2px;font-weight:normal;color:#404040;">Svoz odpadu 2.0</div>
<div class="a" style="left:1639px;top:633px;width:18.9px;height:18px;background:#76b230;border-radius:2.6px"></div>
<svg class="a" style="left:1643.9px;top:637.1px;overflow:visible" width="9.2" height="9.2" viewBox="0 0 9.2 9.2"><path d="M0.3 8.9L0.87 6.07L6.0 0.94Q6.9 0.1 7.9 0.9L8.3 1.3Q9.1 2.3 8.26 3.2L3.13 8.33Z" fill="#fff"/><path d="M5.3 1.6L7.6 3.9" stroke="#76b230" stroke-width="0.7"/><path d="M1.2 6.2L3.0 8.0" stroke="#76b230" stroke-width="0.5"/></svg>
<div class="a" style="left:1663.1px;top:633px;width:18.9px;height:18px;background:#76b230;border-radius:2.6px"></div>
<svg class="a" style="left:1667.8999999999999px;top:637.3px;overflow:visible" width="9.4" height="9" viewBox="0 0 9.4 9"><path d="M1.6 3V1.2Q1.6 0.5 2.3 0.5H7.1Q7.8 0.5 7.8 1.2V3" fill="none" stroke="#fff" stroke-width="1.1"/><rect x="0" y="3.3" width="9.4" height="3.8" rx="0.7" fill="#fff"/><rect x="2.2" y="5.9" width="5" height="2.7" fill="#76b230" stroke="#fff" stroke-width="1"/></svg>
<div class="a" style="left:1686.1px;top:633px;width:18.9px;height:18px;background:#76b230;border-radius:2.6px"></div>
<svg class="a" style="left:1692.3999999999999px;top:638.4px;overflow:visible" width="6.5" height="6.5" viewBox="0 0 6.5 6.5"><path d="M0.5 0.5L6.0 6.0M6.0 0.5L0.5 6.0" stroke="#fff" stroke-width="1.7"/></svg>
<div class="a" style="left:9px;top:674px;width:1710px;height:1px;background:#dfe3e8"></div>
<div class="t" style="left:20px;top:660.37px;font-size:10.2px;font-weight:normal;color:#404040;">Obsluha nádoby</div>
<div class="t" style="left:137.3px;top:660.37px;font-size:10.2px;font-weight:normal;color:#404040;">Obsloužení polohou</div>
<div class="t" style="left:353.2px;top:660.37px;font-size:10.2px;font-weight:normal;color:#404040;">27.09.2025 06:42</div>
<div class="t" style="left:587.0999999999999px;top:660.37px;font-size:10.2px;font-weight:normal;color:#404040;">Nová</div>
<div class="t" style="left:937.9499999999999px;top:660.37px;font-size:10.2px;font-weight:normal;color:#404040;">Service</div>
<div class="t" style="left:1054.8999999999999px;top:660.37px;font-size:10.2px;font-weight:normal;color:#404040;">27.09.2025</div>
<div class="t" style="left:1288.8px;top:660.37px;font-size:10.2px;font-weight:normal;color:#404040;">27.09.2025</div>
<div class="t" style="left:1405.7499999999998px;top:660.37px;font-size:10.2px;font-weight:normal;color:#404040;">Ú/07/01/R/39/So</div>
<div class="t" style="left:1522.7px;top:660.37px;font-size:10.2px;font-weight:normal;color:#404040;">Svoz odpadu 2.0</div>
<div class="a" style="left:1639px;top:655px;width:18.9px;height:18px;background:#76b230;border-radius:2.6px"></div>
<svg class="a" style="left:1643.9px;top:659.1px;overflow:visible" width="9.2" height="9.2" viewBox="0 0 9.2 9.2"><path d="M0.3 8.9L0.87 6.07L6.0 0.94Q6.9 0.1 7.9 0.9L8.3 1.3Q9.1 2.3 8.26 3.2L3.13 8.33Z" fill="#fff"/><path d="M5.3 1.6L7.6 3.9" stroke="#76b230" stroke-width="0.7"/><path d="M1.2 6.2L3.0 8.0" stroke="#76b230" stroke-width="0.5"/></svg>
<div class="a" style="left:1663.1px;top:655px;width:18.9px;height:18px;background:#76b230;border-radius:2.6px"></div>
<svg class="a" style="left:1667.8999999999999px;top:659.3px;overflow:visible" width="9.4" height="9" viewBox="0 0 9.4 9"><path d="M1.6 3V1.2Q1.6 0.5 2.3 0.5H7.1Q7.8 0.5 7.8 1.2V3" fill="none" stroke="#fff" stroke-width="1.1"/><rect x="0" y="3.3" width="9.4" height="3.8" rx="0.7" fill="#fff"/><rect x="2.2" y="5.9" width="5" height="2.7" fill="#76b230" stroke="#fff" stroke-width="1"/></svg>
<div class="a" style="left:1686.1px;top:655px;width:18.9px;height:18px;background:#76b230;border-radius:2.6px"></div>
<svg class="a" style="left:1692.3999999999999px;top:660.4px;overflow:visible" width="6.5" height="6.5" viewBox="0 0 6.5 6.5"><path d="M0.5 0.5L6.0 6.0M6.0 0.5L0.5 6.0" stroke="#fff" stroke-width="1.7"/></svg>
<div class="a" style="left:9px;top:675px;width:1710px;height:21px;background:#f4f7ef"></div>
<div class="a" style="left:9px;top:696px;width:1710px;height:1px;background:#dfe3e8"></div>
<div class="t" style="left:20px;top:681.37px;font-size:10.2px;font-weight:normal;color:#404040;">Obsluha nádoby</div>
<div class="t" style="left:137.3px;top:681.37px;font-size:10.2px;font-weight:normal;color:#404040;">Obsloužení polohou</div>
<div class="t" style="left:353.2px;top:681.37px;font-size:10.2px;font-weight:normal;color:#404040;">27.09.2025 14:56</div>
<div class="t" style="left:587.0999999999999px;top:681.37px;font-size:10.2px;font-weight:normal;color:#404040;">Nová</div>
<div class="t" style="left:937.9499999999999px;top:681.37px;font-size:10.2px;font-weight:normal;color:#404040;">Service</div>
<div class="t" style="left:1054.8999999999999px;top:681.37px;font-size:10.2px;font-weight:normal;color:#404040;">27.09.2025</div>
<div class="t" style="left:1288.8px;top:681.37px;font-size:10.2px;font-weight:normal;color:#404040;">27.09.2025</div>
<div class="t" style="left:1405.7499999999998px;top:681.37px;font-size:10.2px;font-weight:normal;color:#404040;">Ú/07/01/O/39/So</div>
<div class="t" style="left:1522.7px;top:681.37px;font-size:10.2px;font-weight:normal;color:#404040;">Svoz odpadu 2.0</div>
<div class="a" style="left:1639px;top:676px;width:18.9px;height:18px;background:#76b230;border-radius:2.6px"></div>
<svg class="a" style="left:1643.9px;top:680.1px;overflow:visible" width="9.2" height="9.2" viewBox="0 0 9.2 9.2"><path d="M0.3 8.9L0.87 6.07L6.0 0.94Q6.9 0.1 7.9 0.9L8.3 1.3Q9.1 2.3 8.26 3.2L3.13 8.33Z" fill="#fff"/><path d="M5.3 1.6L7.6 3.9" stroke="#76b230" stroke-width="0.7"/><path d="M1.2 6.2L3.0 8.0" stroke="#76b230" stroke-width="0.5"/></svg>
<div class="a" style="left:1663.1px;top:676px;width:18.9px;height:18px;background:#76b230;border-radius:2.6px"></div>
<svg class="a" style="left:1667.8999999999999px;top:680.3px;overflow:visible" width="9.4" height="9" viewBox="0 0 9.4 9"><path d="M1.6 3V1.2Q1.6 0.5 2.3 0.5H7.1Q7.8 0.5 7.8 1.2V3" fill="none" stroke="#fff" stroke-width="1.1"/><rect x="0" y="3.3" width="9.4" height="3.8" rx="0.7" fill="#fff"/><rect x="2.2" y="5.9" width="5" height="2.7" fill="#76b230" stroke="#fff" stroke-width="1"/></svg>
<div class="a" style="left:1686.1px;top:676px;width:18.9px;height:18px;background:#76b230;border-radius:2.6px"></div>
<svg class="a" style="left:1692.3999999999999px;top:681.4px;overflow:visible" width="6.5" height="6.5" viewBox="0 0 6.5 6.5"><path d="M0.5 0.5L6.0 6.0M6.0 0.5L0.5 6.0" stroke="#fff" stroke-width="1.7"/></svg>
<div class="a" style="left:9px;top:718px;width:1710px;height:1px;background:#dfe3e8"></div>
<div class="t" style="left:20px;top:703.37px;font-size:10.2px;font-weight:normal;color:#404040;">Obsluha nádoby</div>
<div class="t" style="left:137.3px;top:703.37px;font-size:10.2px;font-weight:normal;color:#404040;">Obsloužení polohou</div>
<div class="t" style="left:353.2px;top:703.37px;font-size:10.2px;font-weight:normal;color:#404040;">28.09.2025 09:57</div>
<div class="t" style="left:587.0999999999999px;top:703.37px;font-size:10.2px;font-weight:normal;color:#404040;">Nová</div>
<div class="t" style="left:937.9499999999999px;top:703.37px;font-size:10.2px;font-weight:normal;color:#404040;">Service</div>
<div class="t" style="left:1054.8999999999999px;top:703.37px;font-size:10.2px;font-weight:normal;color:#404040;">28.09.2025</div>
<div class="t" style="left:1288.8px;top:703.37px;font-size:10.2px;font-weight:normal;color:#404040;">28.09.2025</div>
<div class="t" style="left:1405.7499999999998px;top:703.37px;font-size:10.2px;font-weight:normal;color:#404040;">Ú/07/01/R/39/Ne</div>
<div class="t" style="left:1522.7px;top:703.37px;font-size:10.2px;font-weight:normal;color:#404040;">Svoz odpadu 2.0</div>
<div class="a" style="left:1639px;top:698px;width:18.9px;height:18px;background:#76b230;border-radius:2.6px"></div>
<svg class="a" style="left:1643.9px;top:702.1px;overflow:visible" width="9.2" height="9.2" viewBox="0 0 9.2 9.2"><path d="M0.3 8.9L0.87 6.07L6.0 0.94Q6.9 0.1 7.9 0.9L8.3 1.3Q9.1 2.3 8.26 3.2L3.13 8.33Z" fill="#fff"/><path d="M5.3 1.6L7.6 3.9" stroke="#76b230" stroke-width="0.7"/><path d="M1.2 6.2L3.0 8.0" stroke="#76b230" stroke-width="0.5"/></svg>
<div class="a" style="left:1663.1px;top:698px;width:18.9px;height:18px;background:#76b230;border-radius:2.6px"></div>
<svg class="a" style="left:1667.8999999999999px;top:702.3px;overflow:visible" width="9.4" height="9" viewBox="0 0 9.4 9"><path d="M1.6 3V1.2Q1.6 0.5 2.3 0.5H7.1Q7.8 0.5 7.8 1.2V3" fill="none" stroke="#fff" stroke-width="1.1"/><rect x="0" y="3.3" width="9.4" height="3.8" rx="0.7" fill="#fff"/><rect x="2.2" y="5.9" width="5" height="2.7" fill="#76b230" stroke="#fff" stroke-width="1"/></svg>
<div class="a" style="left:1686.1px;top:698px;width:18.9px;height:18px;background:#76b230;border-radius:2.6px"></div>
<svg class="a" style="left:1692.3999999999999px;top:703.4px;overflow:visible" width="6.5" height="6.5" viewBox="0 0 6.5 6.5"><path d="M0.5 0.5L6.0 6.0M6.0 0.5L0.5 6.0" stroke="#fff" stroke-width="1.7"/></svg>
<div class="a" style="left:9px;top:719px;width:1710px;height:20px;background:#f4f7ef"></div>
<div class="a" style="left:9px;top:739px;width:1710px;height:1px;background:#dfe3e8"></div>
<div class="t" style="left:20px;top:725.37px;font-size:10.2px;font-weight:normal;color:#404040;">Obsluha nádoby</div>
<div class="t" style="left:137.3px;top:725.37px;font-size:10.2px;font-weight:normal;color:#404040;">Obsloužení polohou</div>
<div class="t" style="left:353.2px;top:725.37px;font-size:10.2px;font-weight:normal;color:#404040;">28.09.2025 17:58</div>
<div class="t" style="left:587.0999999999999px;top:725.37px;font-size:10.2px;font-weight:normal;color:#404040;">Nová</div>
<div class="t" style="left:937.9499999999999px;top:725.37px;font-size:10.2px;font-weight:normal;color:#404040;">Service</div>
<div class="t" style="left:1054.8999999999999px;top:725.37px;font-size:10.2px;font-weight:normal;color:#404040;">28.09.2025</div>
<div class="t" style="left:1288.8px;top:725.37px;font-size:10.2px;font-weight:normal;color:#404040;">28.09.2025</div>
<div class="t" style="left:1405.7499999999998px;top:725.37px;font-size:10.2px;font-weight:normal;color:#404040;">Ú/07/01/N/39/Ne</div>
<div class="t" style="left:1522.7px;top:725.37px;font-size:10.2px;font-weight:normal;color:#404040;">Svoz odpadu 2.0</div>
<div class="a" style="left:1639px;top:720px;width:18.9px;height:18px;background:#76b230;border-radius:2.6px"></div>
<svg class="a" style="left:1643.9px;top:724.1px;overflow:visible" width="9.2" height="9.2" viewBox="0 0 9.2 9.2"><path d="M0.3 8.9L0.87 6.07L6.0 0.94Q6.9 0.1 7.9 0.9L8.3 1.3Q9.1 2.3 8.26 3.2L3.13 8.33Z" fill="#fff"/><path d="M5.3 1.6L7.6 3.9" stroke="#76b230" stroke-width="0.7"/><path d="M1.2 6.2L3.0 8.0" stroke="#76b230" stroke-width="0.5"/></svg>
<div class="a" style="left:1663.1px;top:720px;width:18.9px;height:18px;background:#76b230;border-radius:2.6px"></div>
<svg class="a" style="left:1667.8999999999999px;top:724.3px;overflow:visible" width="9.4" height="9" viewBox="0 0 9.4 9"><path d="M1.6 3V1.2Q1.6 0.5 2.3 0.5H7.1Q7.8 0.5 7.8 1.2V3" fill="none" stroke="#fff" stroke-width="1.1"/><rect x="0" y="3.3" width="9.4" height="3.8" rx="0.7" fill="#fff"/><rect x="2.2" y="5.9" width="5" height="2.7" fill="#76b230" stroke="#fff" stroke-width="1"/></svg>
<div class="a" style="left:1686.1px;top:720px;width:18.9px;height:18px;background:#76b230;border-radius:2.6px"></div>
<svg class="a" style="left:1692.3999999999999px;top:725.4px;overflow:visible" width="6.5" height="6.5" viewBox="0 0 6.5 6.5"><path d="M0.5 0.5L6.0 6.0M6.0 0.5L0.5 6.0" stroke="#fff" stroke-width="1.7"/></svg>
<div class="a" style="left:9px;top:761px;width:1710px;height:1px;background:#dfe3e8"></div>
<div class="t" style="left:20px;top:746.37px;font-size:10.2px;font-weight:normal;color:#404040;">Obsluha nádoby</div>
<div class="t" style="left:137.3px;top:746.37px;font-size:10.2px;font-weight:normal;color:#404040;">Obsloužení polohou</div>
<div class="t" style="left:353.2px;top:746.37px;font-size:10.2px;font-weight:normal;color:#404040;">29.09.2025 08:01</div>
<div class="t" style="left:587.0999999999999px;top:746.37px;font-size:10.2px;font-weight:normal;color:#404040;">Nová</div>
<div class="t" style="left:937.9499999999999px;top:746.37px;font-size:10.2px;font-weight:normal;color:#404040;">Service</div>
<div class="t" style="left:1054.8999999999999px;top:746.37px;font-size:10.2px;font-weight:normal;color:#404040;">29.09.2025</div>
<div class="t" style="left:1288.8px;top:746.37px;font-size:10.2px;font-weight:normal;color:#404040;">29.09.2025</div>
<div class="t" style="left:1405.7499999999998px;top:746.37px;font-size:10.2px;font-weight:normal;color:#404040;">Ú/07/01/R1/40/Po</div>
<div class="t" style="left:1522.7px;top:746.37px;font-size:10.2px;font-weight:normal;color:#404040;">Svoz odpadu 2.0</div>
<div class="a" style="left:1639px;top:741px;width:18.9px;height:18px;background:#76b230;border-radius:2.6px"></div>
<svg class="a" style="left:1643.9px;top:745.1px;overflow:visible" width="9.2" height="9.2" viewBox="0 0 9.2 9.2"><path d="M0.3 8.9L0.87 6.07L6.0 0.94Q6.9 0.1 7.9 0.9L8.3 1.3Q9.1 2.3 8.26 3.2L3.13 8.33Z" fill="#fff"/><path d="M5.3 1.6L7.6 3.9" stroke="#76b230" stroke-width="0.7"/><path d="M1.2 6.2L3.0 8.0" stroke="#76b230" stroke-width="0.5"/></svg>
<div class="a" style="left:1663.1px;top:741px;width:18.9px;height:18px;background:#76b230;border-radius:2.6px"></div>
<svg class="a" style="left:1667.8999999999999px;top:745.3px;overflow:visible" width="9.4" height="9" viewBox="0 0 9.4 9"><path d="M1.6 3V1.2Q1.6 0.5 2.3 0.5H7.1Q7.8 0.5 7.8 1.2V3" fill="none" stroke="#fff" stroke-width="1.1"/><rect x="0" y="3.3" width="9.4" height="3.8" rx="0.7" fill="#fff"/><rect x="2.2" y="5.9" width="5" height="2.7" fill="#76b230" stroke="#fff" stroke-width="1"/></svg>
<div class="a" style="left:1686.1px;top:741px;width:18.9px;height:18px;background:#76b230;border-radius:2.6px"></div>
<svg class="a" style="left:1692.3999999999999px;top:746.4px;overflow:visible" width="6.5" height="6.5" viewBox="0 0 6.5 6.5"><path d="M0.5 0.5L6.0 6.0M6.0 0.5L0.5 6.0" stroke="#fff" stroke-width="1.7"/></svg>
<div class="a" style="left:9px;top:762px;width:1710px;height:20px;background:#f4f7ef"></div>
<div class="a" style="left:9px;top:782px;width:1710px;height:1px;background:#dfe3e8"></div>
<div class="t" style="left:20px;top:768.37px;font-size:10.2px;font-weight:normal;color:#404040;">Obsluha nádoby</div>
<div class="t" style="left:137.3px;top:768.37px;font-size:10.2px;font-weight:normal;color:#404040;">Obsloužení polohou</div>
<div class="t" style="left:353.2px;top:768.37px;font-size:10.2px;font-weight:normal;color:#404040;">29.09.2025 17:50</div>
<div class="t" style="left:587.0999999999999px;top:768.37px;font-size:10.2px;font-weight:normal;color:#404040;">Nová</div>
<div class="t" style="left:937.9499999999999px;top:768.37px;font-size:10.2px;font-weight:normal;color:#404040;">Service</div>
<div class="t" style="left:1054.8999999999999px;top:768.37px;font-size:10.2px;font-weight:normal;color:#404040;">29.09.2025</div>
<div class="t" style="left:1288.8px;top:768.37px;font-size:10.2px;font-weight:normal;color:#404040;">29.09.2025</div>
<div class="t" style="left:1405.7499999999998px;top:768.37px;font-size:10.2px;font-weight:normal;color:#404040;">Ú/07/01/N/40/Po</div>
<div class="t" style="left:1522.7px;top:768.37px;font-size:10.2px;font-weight:normal;color:#404040;">Svoz odpadu 2.0</div>
<div class="a" style="left:1639px;top:763px;width:18.9px;height:18px;background:#76b230;border-radius:2.6px"></div>
<svg class="a" style="left:1643.9px;top:767.1px;overflow:visible" width="9.2" height="9.2" viewBox="0 0 9.2 9.2"><path d="M0.3 8.9L0.87 6.07L6.0 0.94Q6.9 0.1 7.9 0.9L8.3 1.3Q9.1 2.3 8.26 3.2L3.13 8.33Z" fill="#fff"/><path d="M5.3 1.6L7.6 3.9" stroke="#76b230" stroke-width="0.7"/><path d="M1.2 6.2L3.0 8.0" stroke="#76b230" stroke-width="0.5"/></svg>
<div class="a" style="left:1663.1px;top:763px;width:18.9px;height:18px;background:#76b230;border-radius:2.6px"></div>
<svg class="a" style="left:1667.8999999999999px;top:767.3px;overflow:visible" width="9.4" height="9" viewBox="0 0 9.4 9"><path d="M1.6 3V1.2Q1.6 0.5 2.3 0.5H7.1Q7.8 0.5 7.8 1.2V3" fill="none" stroke="#fff" stroke-width="1.1"/><rect x="0" y="3.3" width="9.4" height="3.8" rx="0.7" fill="#fff"/><rect x="2.2" y="5.9" width="5" height="2.7" fill="#76b230" stroke="#fff" stroke-width="1"/></svg>
<div class="a" style="left:1686.1px;top:763px;width:18.9px;height:18px;background:#76b230;border-radius:2.6px"></div>
<svg class="a" style="left:1692.3999999999999px;top:768.4px;overflow:visible" width="6.5" height="6.5" viewBox="0 0 6.5 6.5"><path d="M0.5 0.5L6.0 6.0M6.0 0.5L0.5 6.0" stroke="#fff" stroke-width="1.7"/></svg>
<div class="a" style="left:9px;top:804px;width:1710px;height:1px;background:#dfe3e8"></div>
<div class="t" style="left:20px;top:789.37px;font-size:10.2px;font-weight:normal;color:#404040;">Obsluha nádoby</div>
<div class="t" style="left:137.3px;top:789.37px;font-size:10.2px;font-weight:normal;color:#404040;">Obsloužení polohou</div>
<div class="t" style="left:353.2px;top:789.37px;font-size:10.2px;font-weight:normal;color:#404040;">30.09.2025 07:45</div>
<div class="t" style="left:587.0999999999999px;top:789.37px;font-size:10.2px;font-weight:normal;color:#404040;">Nová</div>
<div class="t" style="left:937.9499999999999px;top:789.37px;font-size:10.2px;font-weight:normal;color:#404040;">Service</div>
<div class="t" style="left:1054.8999999999999px;top:789.37px;font-size:10.2px;font-weight:normal;color:#404040;">30.09.2025</div>
<div class="t" style="left:1288.8px;top:789.37px;font-size:10.2px;font-weight:normal;color:#404040;">30.09.2025</div>
<div class="t" style="left:1405.7499999999998px;top:789.37px;font-size:10.2px;font-weight:normal;color:#404040;">Ú/07/01/R1/40/Út</div>
<div class="t" style="left:1522.7px;top:789.37px;font-size:10.2px;font-weight:normal;color:#404040;">Svoz odpadu 2.0</div>
<div class="a" style="left:1639px;top:784px;width:18.9px;height:18px;background:#76b230;border-radius:2.6px"></div>
<svg class="a" style="left:1643.9px;top:788.1px;overflow:visible" width="9.2" height="9.2" viewBox="0 0 9.2 9.2"><path d="M0.3 8.9L0.87 6.07L6.0 0.94Q6.9 0.1 7.9 0.9L8.3 1.3Q9.1 2.3 8.26 3.2L3.13 8.33Z" fill="#fff"/><path d="M5.3 1.6L7.6 3.9" stroke="#76b230" stroke-width="0.7"/><path d="M1.2 6.2L3.0 8.0" stroke="#76b230" stroke-width="0.5"/></svg>
<div class="a" style="left:1663.1px;top:784px;width:18.9px;height:18px;background:#76b230;border-radius:2.6px"></div>
<svg class="a" style="left:1667.8999999999999px;top:788.3px;overflow:visible" width="9.4" height="9" viewBox="0 0 9.4 9"><path d="M1.6 3V1.2Q1.6 0.5 2.3 0.5H7.1Q7.8 0.5 7.8 1.2V3" fill="none" stroke="#fff" stroke-width="1.1"/><rect x="0" y="3.3" width="9.4" height="3.8" rx="0.7" fill="#fff"/><rect x="2.2" y="5.9" width="5" height="2.7" fill="#76b230" stroke="#fff" stroke-width="1"/></svg>
<div class="a" style="left:1686.1px;top:784px;width:18.9px;height:18px;background:#76b230;border-radius:2.6px"></div>
<svg class="a" style="left:1692.3999999999999px;top:789.4px;overflow:visible" width="6.5" height="6.5" viewBox="0 0 6.5 6.5"><path d="M0.5 0.5L6.0 6.0M6.0 0.5L0.5 6.0" stroke="#fff" stroke-width="1.7"/></svg>
<div class="a" style="left:5.6px;top:514.6px;width:1718.6px;height:296.69999999999993px;border:3.2px solid #4464de"></div>
<svg class="a" style="left:22.8px;top:877.8px;overflow:visible" width="5.5" height="9" viewBox="0 0 5.5 9"><path d="M5 0.5L1 4.5L5 8.5" fill="none" stroke="#c8c8c8" stroke-width="1.2"/></svg>
<div class="t" style="left:45px;top:878.03px;font-size:10px;font-weight:normal;color:#b8b8b8;">1</div>
<svg class="a" style="left:68px;top:877.8px;overflow:visible" width="5.5" height="9" viewBox="0 0 5.5 9"><path d="M0.5 0.5L4.5 4.5L0.5 8.5" fill="none" stroke="#c8c8c8" stroke-width="1.2"/></svg>
<div class="a" style="left:9px;top:864px;width:1900px;height:1px;background:#dcdee0"></div>
<div class="t" style="left:1303.8px;width:600px;text-align:right;top:877.75px;font-size:10.1px;font-weight:normal;color:#333;">1 z 1 stránek (11 položek)</div>
<div class="a" style="left:0px;top:897.8px;width:1916px;height:9.7px;background:#ebecee"></div>
<div class="a" style="left:0px;top:907.2px;width:1916px;height:1px;background:#d8d9db"></div>
<div class="a" style="left:0px;top:908.2px;width:1916px;height:43px;background:#fff"></div>
<div class="a" style="left:9px;top:917.1px;width:103.8px;height:28.5px;background:#76b230;border-radius:3px;box-shadow:0 1px 2px rgba(0,0,0,.2)"></div>
<div class="t" style="left:41px;top:924.87px;font-size:13.5px;font-weight:bold;color:#fff;">0</div>
<div class="t" style="left:51.5px;top:924.87px;font-size:13.5px;font-weight:bold;color:#fff;">x</div>
<svg class="a" style="left:63px;top:924.6px;overflow:visible" width="17" height="13" viewBox="0 0 17 13"><rect x="3.4" y="0.4" width="13" height="9.6" rx="1.6" fill="#fff"/><path d="M5 8.6L8.6 4.2L11 6.6L12.6 5L15 8.6Z" fill="#76b230"/><circle cx="6.8" cy="3.2" r="1.1" fill="#76b230"/><path d="M1 2.6V11Q1 12.2 2.2 12.2H12.6" fill="none" stroke="#fff" stroke-width="1.6"/></svg>
<div class="a" style="left:114.6px;top:912.4px;width:133.6px;height:34.8px;border:4.8px solid #4464de"></div>
<div class="t" style="left:121.9px;top:925.59px;font-size:12.3px;font-weight:bold;color:#111;">Události (11)</div>
<div class="a" style="left:204px;top:925px;width:27px;height:13.8px;background:#76b230;border-radius:7px"></div>
<div class="a" style="left:217.4px;top:925.4px;width:13px;height:13px;border-radius:50%;background:#fff"></div>
<div class="a" style="left:1696.9px;top:917.1px;width:99.1px;height:28.5px;background:#76b230;border-radius:3px;box-shadow:0 1px 2px rgba(0,0,0,.2)"></div>
<div class="t" style="left:1446.5px;width:600px;text-align:center;top:925.33px;font-size:12.6px;font-weight:bold;color:#fff;">Uložit</div>
<div class="a" style="left:1804.6px;top:917.1px;width:104.9px;height:28.5px;background:#ececec;border-radius:3px;box-shadow:0 1px 2px rgba(0,0,0,.15)"></div>
<div class="t" style="left:1557px;width:600px;text-align:center;top:924.83px;font-size:13.2px;font-weight:normal;color:#222;">Storno</div>
<svg class="a" style="left:0px;top:0px;overflow:visible" width="1916" height="951" viewBox="0 0 1916 951"><path d="M159 911.8L318 832.6" stroke="#4464de" stroke-width="1.3"/><path d="M335.7 823.8L316.2 827.6L321.9 838.1Z" fill="#4464de"/></svg>
<div class="a" style="left:1815.3px;top:471.3px;width:35px;height:35px;border-radius:50%;background:#4466e0;border:1.5px solid #1a1a1a;box-shadow:inset 0 0 0 0.8px #fff"></div>
<div class="t" style="left:1812.8px;width:40px;text-align:center;top:480.90000000000003px;font-family:'Liberation Serif',serif;font-weight:bold;font-size:18.8px;color:#fff;line-height:18px">1</div>
<div class="a" style="left:1621.5px;top:549.5px;width:35px;height:35px;border-radius:50%;background:#4466e0;border:1.5px solid #1a1a1a;box-shadow:inset 0 0 0 0.8px #fff"></div>
<div class="t" style="left:1619px;width:40px;text-align:center;top:559.1px;font-family:'Liberation Serif',serif;font-weight:bold;font-size:18.8px;color:#fff;line-height:18px">2</div>
<div class="a" style="left:1647.5px;top:596.3px;width:35px;height:35px;border-radius:50%;background:#4466e0;border:1.5px solid #1a1a1a;box-shadow:inset 0 0 0 0.8px #fff"></div>
<div class="t" style="left:1645px;width:40px;text-align:center;top:605.9px;font-family:'Liberation Serif',serif;font-weight:bold;font-size:18.8px;color:#fff;line-height:18px">3</div>
<div class="a" style="left:1669.5px;top:637.3px;width:35px;height:35px;border-radius:50%;background:#4466e0;border:1.5px solid #1a1a1a;box-shadow:inset 0 0 0 0.8px #fff"></div>
<div class="t" style="left:1667px;width:40px;text-align:center;top:646.9px;font-family:'Liberation Serif',serif;font-weight:bold;font-size:18.8px;color:#fff;line-height:18px">4</div>
</body></html>
